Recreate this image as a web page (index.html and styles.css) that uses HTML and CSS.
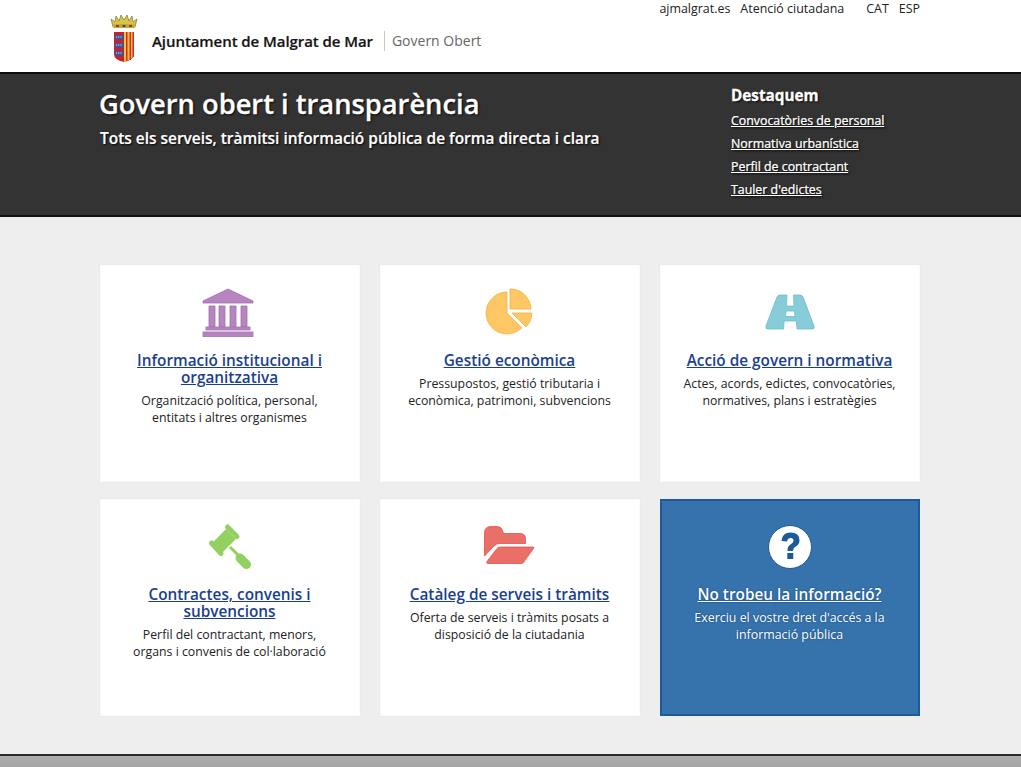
FILE: index.html
```html
<!DOCTYPE html>
<html lang="ca">
<head>
<meta charset="utf-8">
<title>Govern Obert</title>
<link rel="stylesheet" href="styles.css">
</head>
<body>
<header class="top">
  <div class="brand">
    <svg class="shield" width="28" height="50" viewBox="0 0 28 50">
      <path d="M3 14 L1 6 L5 9 L6 3 L9 8 L11 2 L14 7 L17 2 L19 8 L22 3 L23 9 L27 6 L25 14 Z" fill="#d8c648" stroke="#6d6420" stroke-width=".6"/>
      <rect x="3" y="11" width="22" height="4" rx="1.5" fill="#c4ac2c"/>
      <rect x="6" y="12" width="3" height="2" fill="#b02a3a"/><rect x="12.500" y="12" width="3" height="2" fill="#2a4a9a"/><rect x="19" y="12" width="3" height="2" fill="#b02a3a"/>
      <path d="M4 19 H24 V41 Q24 47 14 49 Q4 47 4 41 Z" fill="#c8202c"/>
      <path d="M14 19 H24 V41 Q24 46 14 49 Z" fill="#efc23c"/>
      <path d="M16 19 H17.500 V48 H16 Z M19.500 19 H21 V47 H19.500 Z M22.500 19 H24 V44 H22.500 Z" fill="#d42a2a"/>
      <rect x="5" y="22" width="8.500" height="4.500" fill="#2c5aa8"/><rect x="5" y="30" width="8.500" height="4.500" fill="#2c5aa8"/><rect x="5" y="38" width="8.500" height="4.500" fill="#2c5aa8"/>
      <path d="M6 24 H12.500 M6 32 H12.500 M6 40 H12.500" stroke="#dfe6f5" stroke-width="1.200" stroke-dasharray="1.200 1"/>
    </svg>
    <span class="brand-name">Ajuntament de Malgrat de Mar</span>
    <span class="brand-sub">Govern Obert</span>
  </div>
  <nav class="topnav">
    <a>ajmalgrat.es</a><a>Atenció ciutadana</a><a class="lang">CAT</a><a>ESP</a>
  </nav>
</header>

<section class="hero">
  <div class="wrap hero-in">
    <div class="hero-main">
      <h1>Govern obert i transparència</h1>
      <p>Tots els serveis, tràmitsi informació pública de forma directa i clara</p>
    </div>
    <aside class="hero-side">
      <h2>Destaquem</h2>
      <a href="#">Convocatòries de personal</a>
      <a href="#">Normativa urbanística</a>
      <a href="#">Perfil de contractant</a>
      <a href="#">Tauler d'edictes</a>
    </aside>
  </div>
</section>

<main class="grid">
  <article class="card">
    <svg class="ico" width="56" height="50" viewBox="0 0 56 50"><g fill="#b685bf" stroke="#a36fae" stroke-width=".8"><path d="M26 1 L51 13 V15 H1 V13 Z"/><rect x="7" y="18" width="6" height="21"/><rect x="17" y="18" width="6" height="21"/><rect x="28" y="18" width="6" height="21"/><rect x="39" y="18" width="6" height="21"/><rect x="4" y="39" width="44" height="3"/><rect x="1" y="44" width="50" height="4.500"/></g></svg>
    <h3><a href="#">Informació institucional i organitzativa</a></h3>
    <p>Organització política, personal, entitats i altres organismes</p>
  </article>
  <article class="card">
    <svg class="ico" width="56" height="50" viewBox="0 0 56 50"><g fill="#fdc765" stroke="#f7b13f" stroke-width=".8"><path d="M25 4 V25 L39.850 39.850 A21 21 0 1 1 25 4 Z"/><path d="M28 1 A20.500 20.500 0 0 1 49 21 H28 Z"/><path d="M30 25 H50 Q50 33 44 39 Z"/></g></svg>
    <h3><a href="#">Gestió econòmica</a></h3>
    <p>Pressupostos, gestió tributaria i econòmica, patrimoni, subvencions</p>
  </article>
  <article class="card">
    <svg class="ico" width="56" height="50" viewBox="0 0 56 50"><path d="M18 7 H25 L24.500 18 H32 L31.500 7 H38 Q40 7 41 9 L52 38 Q53 41 50 41 H35 L34.300 33 H22.200 L21.500 41 H6 Q3 41 4 38 L15 9 Q16 7 18 7 Z M24 23 L23.500 28.500 H33 L32.500 23 Z" fill="#86cdd9" fill-rule="evenodd" stroke="#6bbccb" stroke-width=".8"/></svg>
    <h3><a href="#">Acció de govern i normativa</a></h3>
    <p>Actes, acords, edictes, convocatòries, normatives, plans i estratègies</p>
  </article>
  <article class="card">
    <svg class="ico" width="56" height="50" viewBox="0 0 56 50"><g fill="none" stroke="#92d160" stroke-linecap="round"><path d="M9.500 21 L19 31.500" stroke-width="5"/><path d="M25.500 5 L35 14.500" stroke-width="5"/><path d="M15 26 L29 12" stroke-width="14" stroke-linecap="butt"/><path d="M28 25 L37 34" stroke-width="3" stroke-linecap="butt"/><path d="M38 36 L44.500 42.500" stroke-width="9"/></g></svg>
    <h3><a href="#">Contractes, convenis i subvencions</a></h3>
    <p>Perfil del contractant, menors, organs i convenis de col·laboració</p>
  </article>
  <article class="card">
    <svg class="ico" width="56" height="50" viewBox="0 0 56 50"><g fill="#ea6f68" stroke="#e3544c" stroke-width=".8"><path d="M2.500 34 V11 Q2.500 4.500 9 4.500 H15 Q19.500 4.500 20.500 8.500 L21.500 11.500 H38 Q43.500 11.500 43.500 17 V21.500 H18 Q14 21.500 12 24 Z"/><path d="M18.500 25 H51 Q52.500 25 51.500 26.500 L41.500 40.500 Q40.500 41.500 39 41.500 H6 Q4 41.500 5 39.500 L14.500 27 Q16 25 18.500 25 Z"/></g></svg>
    <h3><a href="#">Catàleg de serveis i tràmits</a></h3>
    <p>Oferta de serveis i tràmits posats a disposició de la ciutadania</p>
  </article>
  <article class="card card-help">
    <svg class="ico" width="56" height="50" viewBox="0 0 56 50"><circle cx="28" cy="25" r="21.500" fill="#fff" stroke="#1d5a9a" stroke-width="1"/><path d="M19.500 19 Q20 10.500 28.500 10.500 Q37.500 10.500 37.500 18.500 Q37.500 22.500 33 25 Q31 26 31 29 H25.500 Q25 24.500 29 22 Q31.500 20.500 31.500 18.500 Q31.500 16 28.500 16 Q25.500 16 25 19.500 Z" fill="#1d5a9a"/><rect x="25.300" y="31" width="6" height="6" fill="#1d5a9a"/></svg>
    <h3><a href="#">No trobeu la informació?</a></h3>
    <p>Exerciu el vostre dret d'accés a la informació pública</p>
  </article>
</main>

<footer class="foot"></footer>
</body>
</html>
```
FILE: styles.css
```css
* { box-sizing: border-box; }
html, body { margin: 0; padding: 0; }
body {
  height: 767px;
  overflow: hidden;
  background: #eee;
  font-family: "Open Sans", "Noto Sans", sans-serif;
  color: #111;
  display: flex;
  flex-direction: column;
}
.wrap { width: 820px; margin-left: 100px; }

.top {
  height: 72px;
  flex: none;
  background: #fff;
  display: flex;
  justify-content: space-between;
  align-items: flex-start;
  padding: 0 101px 0 110px;
}
.brand { display: flex; align-items: center; padding-top: 12px; }
.shield { display: block; margin: 1px 14px 0 0; }
.brand-name { font-size: 15px; font-weight: 600; color: #151515; letter-spacing: -.07px; padding-top: 7px; -webkit-text-stroke: .2px #151515; }
.brand-sub {
  font-size: 14px;
  color: #666;
  margin: 7px 0 0 11px;
  padding: 0 0 0 7px;
  line-height: 20px;
  border-left: 1px solid #c8c8c8;
}
.topnav { display: flex; font-size: 12.450px; line-height: 17px; color: #222; }
.topnav a { margin-left: 10px; }
.topnav .lang { margin-left: 22px; }

.hero {
  height: 145px;
  flex: none;
  background: #333;
  border-top: 2px solid #0c0c0c;
  border-bottom: 2px solid #111;
  color: #fff;
  text-shadow: 1px 1px 2px #000;
}
.hero-in { display: flex; justify-content: space-between; }
.hero-main h1 { margin: 12px 0 0 -1px; font-size: 27.300px; line-height: 36px; font-weight: 600; -webkit-text-stroke: .3px #fff; }
.hero-main p { margin: 5px 0 0; font-size: 15.450px; line-height: 22px; font-weight: 600; -webkit-text-stroke: .2px #fff; }
.hero-side { width: 189px; display: flex; flex-direction: column; align-items: flex-start; }
.hero-side h2 { margin: 11px 0 4px; font-size: 15.300px; line-height: 20px; font-weight: 700; -webkit-text-stroke: .3px #fff; }
.hero-side a { color: #fff; font-size: 12.370px; line-height: 23.100px; text-decoration: underline; -webkit-text-stroke: .15px #fff; }

.grid {
  flex: none;
  display: grid;
  grid-template-columns: repeat(3, 260px);
  grid-auto-rows: 217px;
  column-gap: 20px;
  row-gap: 17px;
  width: 820px;
  margin: 48px 0 0 99.500px;
}
.card {
  background: #fff;
  border: 1px solid #fbfbfb;
  box-shadow: 0 0 1px #d8d8d8;
  text-align: center;
  padding: 22px 23px 0;
}
.ico { display: block; margin: 0 auto; }
.card h3 { margin: 14px 0 6px; font-size: 15.350px; line-height: 17px; font-weight: 600; }
.card h3 a { color: #1b3f8f; text-decoration: underline; }
.card p { margin: 0; font-size: 12.300px; line-height: 17.400px; color: #222; font-feature-settings: "locl" 0; }
.card-help { background: #3673ad; border: 2px solid #1c5a9b; box-shadow: none; padding: 21px 22px 0; color: #fff; text-shadow: 0 0 2px #123f70; }
.card-help h3 a { color: #fff; }
.card-help p { color: #fff; font-size: 12.400px; }

.foot {
  margin-top: 38px;
  flex: 1;
  border-top: 2px solid #2a2a2a;
  background: linear-gradient(#adadad, #a4a4a4);
}
```
